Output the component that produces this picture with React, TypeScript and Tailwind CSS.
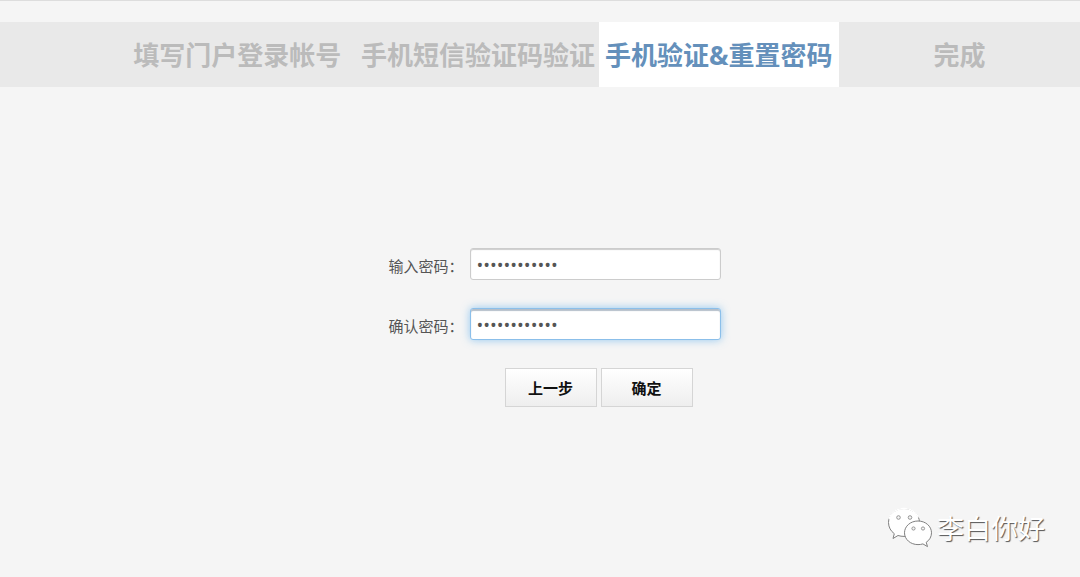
import React, { useState } from 'react';

const steps = ['填写门户登录帐号', '手机短信验证码验证', '手机验证&重置密码', '完成'];
const activeStep = 2;

interface PasswordFieldProps {
    id: string;
    label: string;
    value: string;
    highlighted?: boolean;
    onChange: (value: string) => void;
}

const PasswordField: React.FC<PasswordFieldProps> = ({ id, label, value, highlighted, onChange }) => {
    return (
        <div className="flex items-center">
            <label htmlFor={id} className="w-[110px] shrink-0 pt-1 pr-1.5 text-right text-[15px] leading-5 text-[#555555]">
                {label}
            </label>
            <input
                id={id}
                type="password"
                value={value}
                onChange={e => onChange(e.target.value)}
                className={`h-8 w-[251px] rounded-[3px] border bg-white px-1.5 pt-0.5 font-['Open_Sans',sans-serif] text-[18px] leading-5 text-[#555555] outline-none ${
                    highlighted
                        ? 'border-[#8bbfea] shadow-[inset_0_2px_1px_#b5bfca,0_0_8px_rgba(82,168,236,0.6)]'
                        : 'border-[#cccccc] shadow-[inset_0_1px_1px_#cccccc]'
                }`}
            />
        </div>
    );
};

const WeChatLogo = () => (
    <svg width="46" height="44" viewBox="0 0 46 44" aria-hidden="true">
        <g fill="#ffffff" stroke="#808080" strokeWidth="1" strokeLinejoin="round">
            <path d="M17 1.500C8.200 1.500 1.500 7.500 1.500 15.500c0 4.700 2.300 8.600 5.800 11.200L6 31.500l5-3c2 .6 4 .9 6 .9 8.500 0 15.500-5.900 15.500-13.900S25.500 1.500 17 1.500z" />
            <path d="M31 14c-7.600 0-13.500 5.300-13.500 11.800S23.400 37.600 31 37.600c1.700 0 3.400-.2 4.900-.7l4.600 2.700-1.300-4.300c3.300-2.100 5.300-5.500 5.300-9.500C44.500 19.300 38.600 14 31 14z" />
        </g>
        <path d="M2 12C4 5.500 9.500 1.500 17 1.500c6.500 0 12 3.500 14.500 9" fill="none" stroke="#ffffff" strokeWidth="1.400" />
        <g fill="#f5f5f5" stroke="#8c8c8c" strokeWidth="0.9">
            <circle cx="11.500" cy="10.500" r="1.800" />
            <circle cx="23" cy="10.500" r="1.800" />
            <circle cx="26.500" cy="21.500" r="1.600" />
            <circle cx="36" cy="21.500" r="1.600" />
        </g>
    </svg>
);

const App: React.FC = () => {
    const [password, setPassword] = useState('abcd12345678');
    const [confirm, setConfirm] = useState('abcd12345678');

    const buttonClass =
        'h-[39px] w-[92px] border border-[#d5d5d5] bg-linear-to-b from-white to-[#eeeeee] pt-0.5 text-[15px] font-bold text-[#111111]';

    return (
        <div className="flex min-h-screen flex-col border-t border-[#dddddd] bg-[#f5f5f5] font-['Open_Sans','Noto_Sans_CJK_SC',sans-serif]">
            <ol className="mt-[21px] grid grid-cols-4 bg-[#e9e9e9] pl-[117px]">
                {steps.map((step, index) => (
                    <li
                        key={step}
                        aria-current={index === activeStep ? 'step' : undefined}
                        className={`h-[65px] text-center text-[26px] leading-[67px] font-bold whitespace-nowrap ${
                            index === activeStep ? 'bg-white text-[#6490bb]' : 'text-[#bbbbbb]'
                        }`}
                    >
                        {step}
                    </li>
                ))}
            </ol>

            <form className="mx-auto mt-[161px] space-y-7" onSubmit={e => e.preventDefault()}>
                <PasswordField id="password" label="输入密码：" value={password} onChange={setPassword} />
                <PasswordField id="confirm" label="确认密码：" value={confirm} onChange={setConfirm} highlighted />
                <div className="flex gap-1 pl-[145px]">
                    <button type="button" className={buttonClass}>上一步</button>
                    <button type="submit" className={buttonClass}>确定</button>
                </div>
            </form>

            <footer className="mt-auto flex items-center justify-end gap-1 pr-[35px] pb-[26px]">
                <WeChatLogo />
                <span className="text-[27px] leading-10 text-white [text-shadow:1px_1px_1px_#555555]">李白你好</span>
            </footer>
        </div>
    );
};

export default App;
